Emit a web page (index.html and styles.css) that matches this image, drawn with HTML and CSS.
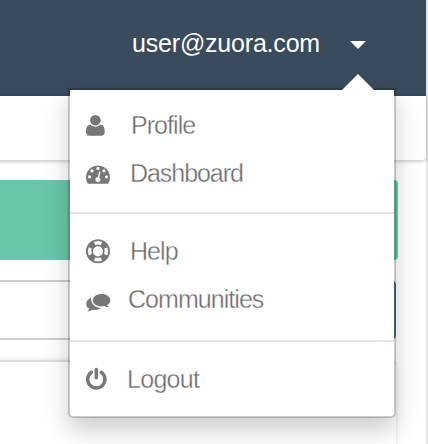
FILE: index.html
```html
<!DOCTYPE html>
<html lang="en">
<head>
<meta charset="utf-8">
<title>Account menu</title>
<link rel="stylesheet" href="styles.css">
</head>
<body>
<div class="page">
  <header class="topbar">
    <span class="email">user@zuora.com</span>
    <svg class="caret" width="16" height="8" viewBox="0 0 16 8"><path d="M0 0H16L8 8Z" fill="#fff"/></svg>
  </header>
  <div class="subbar"></div>
  <main class="content">
    <div class="banner"></div>
    <div class="search"><div class="search-button"></div></div>
    <div class="panel"></div>
  </main>
</div>
<nav class="menu">
  <svg class="arrow" width="32" height="16" viewBox="0 0 32 16"><path d="M0 16L16 0L32 16Z" fill="#fff"/></svg>
  <ul class="group first">
    <li class="item">
      <svg class="icon" width="28" height="28" viewBox="0 0 28 28"><circle cx="9.4" cy="8.3" r="5.3"/><path d="M4.4 12.6C5.8 14 7.5 14.7 9.4 14.7S13 14 14.4 12.6C17.5 12.8 18.8 16 18.8 20C18.8 22.4 17.3 23.7 15.2 23.7H3.6C1.5 23.7 0 22.4 0 20C0 16 1.3 12.8 4.4 12.6Z"/></svg>
      <span class="label profile">Profile</span>
    </li>
    <li class="item">
      <svg class="icon" width="28" height="28" viewBox="0 0 28 28"><path d="M2.5 23.8Q1.8 23.8 1.4 23A12 12 0 1 1 22.6 23Q22.2 23.8 21.5 23.8Z"/><g fill="#fff"><circle cx="3.5" cy="16.8" r="1.6"/><circle cx="6" cy="10.8" r="1.6"/><circle cx="12" cy="8.4" r="1.6"/><circle cx="18" cy="10.8" r="1.6"/><circle cx="20.5" cy="16.8" r="1.6"/><circle cx="11.9" cy="19.6" r="2.5"/></g><path d="M12.2 18.5L13.7 12.3" stroke="#fff" stroke-width="1.4" stroke-linecap="round"/></svg>
      <span class="label dashboard">Dashboard</span>
    </li>
  </ul>
  <ul class="group second">
    <li class="item">
      <svg class="icon" width="28" height="28" viewBox="0 0 28 28"><g fill="none" stroke="#777"><circle cx="12" cy="13.3" r="11.1" stroke-width="1.8"/><circle cx="12" cy="13.3" r="5.9" stroke-width="1.6"/><circle cx="12" cy="13.3" r="8.4" stroke-width="5" pathLength="360" stroke-dasharray="42 48" stroke-dashoffset="-24"/></g></svg>
      <span class="label help">Help</span>
    </li>
    <li class="item">
      <svg class="icon" width="28" height="28" viewBox="0 0 28 28"><path d="M15.6 8C20.5 8 24.3 10.7 24.3 14.2C24.3 16.2 23.1 18 21.1 19.1Q21.5 20.2 22.8 21.1C21.2 21.3 19.7 20.8 18.2 20.1Q17 20.4 15.6 20.4C10.7 20.4 6.9 17.7 6.9 14.2S10.7 8 15.6 8Z"/><path d="M5.2 11.5C4.2 16.5 8.2 21.6 15.1 22.1C12.9 23.8 9.4 24.4 6.5 23.7C5 24.7 3.3 25.4 1.3 25.2Q2.9 24.2 3.3 22.8C-.9 20.4-1.3 14.7 5.2 11.5Z"/></svg>
      <span class="label communities">Communities</span>
    </li>
  </ul>
  <ul class="group last">
    <li class="item">
      <svg class="icon" width="28" height="28" viewBox="0 0 28 28"><g fill="none" stroke="#777" stroke-width="3.5" stroke-linecap="round"><path d="M5.2 6.4A8.6 8.6 0 1 0 15.4 6.4"/><path d="M10.3 3.5V11.7"/></g></svg>
      <span class="label logout">Logout</span>
    </li>
  </ul>
</nav>
</body>
</html>
```
FILE: styles.css
```css
* { box-sizing: border-box; }
body {
  margin: 0;
  width: 428px;
  height: 444px;
  overflow: hidden;
  background: #fff;
  font-family: "Liberation Sans", Arial, sans-serif;
}
.page {
  height: 444px;
  border-right: 2px solid #e5e5e5;
}
.topbar {
  display: flex;
  justify-content: flex-end;
  align-items: center;
  height: 96px;
  padding: 0 60px 9px 0;
  background: #394b5d;
}
.email {
  margin: -2px 30px 0 0;
  color: #fff;
  font-size: 25px;
  line-height: 28px;
  letter-spacing: -0.2px;
}
.caret { margin-top: 3px; }
.subbar {
  height: 64px;
  margin-left: -10px;
  border-radius: 0 0 4px 0;
  background: #fff;
  box-shadow: 0 1px 4px rgba(0, 0, 0, .27);
}
.content { padding-top: 20px; }
.banner {
  width: 398px;
  height: 80px;
  border-radius: 0 4px 4px 0;
  background: #6ac6aa;
}
.search {
  display: flex;
  justify-content: flex-end;
  width: 396px;
  height: 60px;
  margin: 20px 0;
  border: solid #ccc;
  border-width: 2px 0;
  border-radius: 0 5px 5px 0;
}
.search-button {
  width: 60px;
  height: 60px;
  margin-top: -2px;
  border-radius: 0 5px 5px 0;
  background: #4b7488;
}
.panel {
  width: 406px;
  height: 100px;
  margin-left: -10px;
  border: 2px solid #ddd;
  border-left: 0;
  border-right: 0;
  border-radius: 0 6px 0 0;
  box-shadow: 0 0 5px rgba(0, 0, 0, .13);
}
.menu {
  position: absolute;
  top: 88px;
  left: 68px;
  width: 328px;
  height: 330px;
  border: 2px solid rgba(0, 0, 0, .2);
  border-radius: 0 0 5px 5px;
  background: #fff;
  background-clip: padding-box;
  box-shadow: 0 12px 24px rgba(0, 0, 0, .2);
}
.arrow {
  position: absolute;
  top: -16px;
  left: 272px;
}
.group {
  margin: 0;
  padding: 0 0 0 16px;
  list-style: none;
}
.first {
  height: 124px;
  padding-top: 12px;
  border-bottom: 2px solid #e5e5e5;
}
.second {
  height: 128px;
  padding-top: 14px;
  border-bottom: 2px solid #e5e5e5;
}
.last { padding-top: 14px; }
.item {
  display: flex;
  align-items: center;
  height: 48px;
}
.icon {
  flex: none;
  fill: #777;
}
.label {
  margin-top: -2px;
  color: #6c6c6c;
  font-size: 25px;
  line-height: 28px;
  letter-spacing: -0.95px;
  -webkit-text-stroke: .35px #fff;
}
.profile { margin-left: 17px; }
.dashboard { margin-left: 16px; letter-spacing: -1.05px; }
.help { margin-left: 16px; }
.communities { margin-left: 14px; }
.logout { margin-left: 13px; letter-spacing: -0.7px; }
```
